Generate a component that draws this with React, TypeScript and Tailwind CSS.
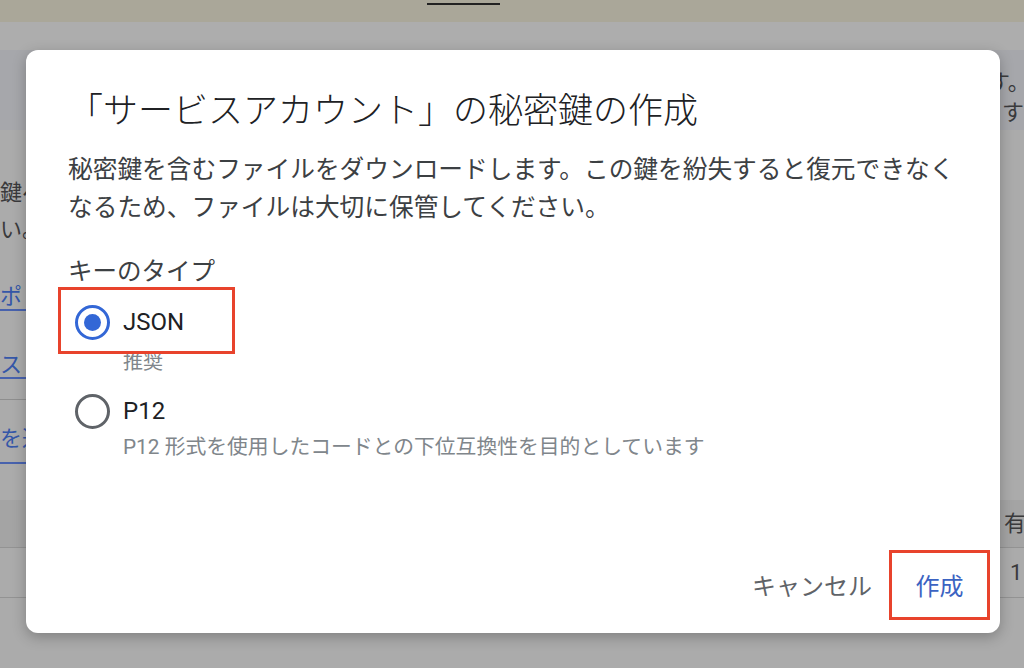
import { useState } from 'react'

const font = { fontFamily: 'Roboto, "Noto Sans CJK JP", sans-serif' }

function Radio({ checked }: { checked: boolean }) {
  return (
    <div className="w-[48px] h-[48px] flex items-center justify-center shrink-0">
      <div
        className={`w-[35px] h-[35px] rounded-full border-[3.5px] flex items-center justify-center ${
          checked ? 'border-[#3367d6]' : 'border-[#5f6368]'
        }`}
      >
        {checked && <div className="w-[17px] h-[17px] rounded-full bg-[#3367d6]" />}
      </div>
    </div>
  )
}

function Background() {
  return (
    <div className="flex flex-col text-[22px] text-[#3a3a3c]">
      <div className="h-[22px] bg-[#aaa799] pl-[427px] pt-[3px]">
        <div className="w-[73px] h-[2px] bg-[#222]" />
      </div>
      <div className="h-[28px] bg-[#adadad]" />
      <div className="h-[80px] bg-[#a6a7ab] flex flex-col items-end whitespace-nowrap">
        <div className="h-[26px] mt-[20px] w-[36px] overflow-hidden leading-[26px]">す。</div>
        <div className="h-[26px] mt-[4px] w-[44px] overflow-hidden leading-[26px]">ます</div>
      </div>
      <div className="h-[370px] flex flex-col whitespace-nowrap">
        <div className="h-[26px] mt-[50px] w-[26px] overflow-hidden leading-[26px]">鍵へ</div>
        <div className="h-[26px] mt-[11px] w-[26px] overflow-hidden leading-[26px]">い。</div>
        <div className="mt-[41px] w-[26px] overflow-hidden text-[#3557a8]">
          <div className="h-[25px] leading-[26px]">ポリ</div>
          <div className="h-[2px] bg-[#4862ad]" />
        </div>
        <div className="mt-[41px] w-[26px] overflow-hidden text-[#3557a8]">
          <div className="h-[25px] leading-[26px]">ス</div>
          <div className="h-[2px] bg-[#4862ad]" />
        </div>
        <div className="mt-[20px] w-[26px] h-[1px] bg-[#8e8e8e]" />
        <div className="mt-[26px] w-[26px] overflow-hidden text-[#3557a8]">
          <div className="h-[26px] leading-[26px]">を追</div>
          <div className="h-[10px]" />
          <div className="h-[2px] bg-[#4862ad]" />
        </div>
      </div>
      <div className="h-[48px] bg-[#a4a4a4] border-b border-[#939393] flex justify-end whitespace-nowrap">
        <div className="w-[20px] overflow-hidden leading-[48px]">有</div>
      </div>
      <div className="h-[50px] border-b border-[#939393] pl-[1010px] leading-[50px]">1</div>
    </div>
  )
}

export default function App() {
  const [type, setType] = useState<'json' | 'p12'>('json')

  return (
    <div className="relative w-[1024px] h-[668px] overflow-hidden bg-[#ababab]" style={font}>
      <Background />

      <div className="absolute left-[26px] top-[50px] w-[974px] h-[583px] bg-white rounded-[12px] shadow-[0_4px_14px_rgba(0,0,0,0.25)] flex flex-col pl-[42px] pt-[40px]">
        <h2 className="text-[35px] leading-[44px] font-light text-[#202124] whitespace-nowrap">
          「サービスアカウント」の秘密鍵の作成
        </h2>
        <p className="mt-[17px] text-[24.7px] leading-[38px] text-[#3c4043] w-[900px]">
          秘密鍵を含むファイルをダウンロードします。この鍵を紛失すると復元できなくなるため、ファイルは大切に保管してください。
        </p>

        <div className="mt-[28px] text-[24.5px] leading-[34px] text-[#3c4043]">キーのタイプ</div>

        <div className="relative mt-[9px] h-[48px] flex items-center cursor-pointer" onClick={() => setType('json')}>
          <Radio checked={type === 'json'} />
          <span className="ml-[7px] text-[24px] text-[#202124]">JSON</span>
          <div className="absolute -left-[10px] -top-[11px] w-[177px] h-[67px] border-[3px] border-[#e8432c]" />
        </div>
        <div className="mt-[2px] pl-[55px] text-[20px] leading-[28px] text-[#80868b]">推奨</div>

        <div className="mt-[11px] h-[48px] flex items-center cursor-pointer" onClick={() => setType('p12')}>
          <Radio checked={type === 'p12'} />
          <span className="ml-[7px] text-[24px] text-[#202124]">P12</span>
        </div>
        <div className="-mt-[2px] pl-[55px] text-[20.8px] leading-[28px] text-[#80868b] whitespace-nowrap">
          P12 形式を使用したコードとの下位互換性を目的としています
        </div>

        <div className="mt-auto mb-[13px] mr-[10px] flex items-center justify-end">
          <button className="text-[24px] text-[#5f6368] mr-[17px] pt-[4px]">キャンセル</button>
          <button className="w-[101px] h-[70px] border-[3px] border-[#e8432c] text-[24px] text-[#3b63c2] pt-[4px]">
            作成
          </button>
        </div>
      </div>
    </div>
  )
}
